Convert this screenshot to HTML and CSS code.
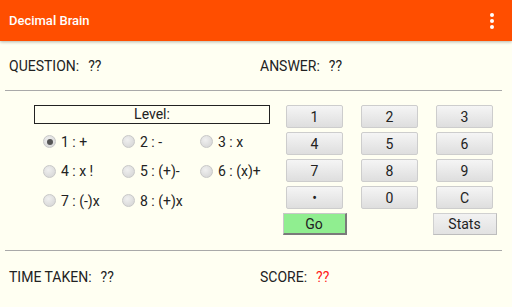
FILE: index.html
```html
<!DOCTYPE html>
<html lang="en">
<head>
    <meta charset="UTF-8">
    <meta name="viewport" content="width=device-width, initial-scale=1.0">
    <title>Decimal Brain</title>
    <link rel="stylesheet" href="styles.css">
</head>
<body>
    <div class="appbar">
        <span class="app-title">Decimal Brain</span>
        <span class="menu-dots"><i></i><i></i><i></i></span>
    </div>

    <div class="info-row">
        <div>QUESTION:<span class="value">??</span></div>
        <div>ANSWER:<span class="value">??</span></div>
    </div>

    <div class="divider"></div>

    <div class="middle">
        <div class="level-panel">
            <div class="level-box">Level:</div>
            <div class="levels">
                <label class="level"><span class="radio checked"></span>1 : +</label>
                <label class="level"><span class="radio"></span>2 : -</label>
                <label class="level"><span class="radio"></span>3 : x</label>
                <label class="level"><span class="radio"></span>4 : x !</label>
                <label class="level"><span class="radio"></span>5 : (+)-</label>
                <label class="level"><span class="radio"></span>6 : (x)+</label>
                <label class="level"><span class="radio"></span>7 : (-)x</label>
                <label class="level"><span class="radio"></span>8 : (+)x</label>
            </div>
        </div>

        <div class="keypad">
            <button class="key">1</button>
            <button class="key">2</button>
            <button class="key">3</button>
            <button class="key">4</button>
            <button class="key">5</button>
            <button class="key">6</button>
            <button class="key">7</button>
            <button class="key">8</button>
            <button class="key">9</button>
            <button class="key">&bull;</button>
            <button class="key">0</button>
            <button class="key">C</button>
            <button class="key go">Go</button>
            <span></span>
            <button class="key stats">Stats</button>
        </div>
    </div>

    <div class="divider"></div>

    <div class="info-row bottom">
        <div>TIME TAKEN:<span class="value">??</span></div>
        <div>SCORE:<span class="value score">??</span></div>
    </div>
</body>
</html>
```

FILE: styles.css
```css
body {
    margin: 0;
    font-family: Roboto, "Liberation Sans", sans-serif;
    font-size: 14px;
    color: #222;
    background: #fffff2;
    height: 307px;
    overflow: hidden;
}
.appbar {
    height: 41px;
    background: #ff4e00;
    display: flex;
    align-items: center;
    justify-content: space-between;
    padding: 0 18px 0 9px;
    box-shadow: 0 1px 3px rgba(0,0,0,0.3);
    position: relative;
}
.app-title {
    color: white;
    font-weight: 500;
    font-size: 13px;
}
.menu-dots {
    display: flex;
    flex-direction: column;
    gap: 2px;
}
.menu-dots i {
    width: 4px;
    height: 4px;
    border-radius: 50%;
    background: white;
}
.info-row {
    height: 49px;
    display: grid;
    grid-template-columns: 251px 1fr;
    align-items: center;
    padding-left: 9px;
}
.info-row.bottom {
    height: 52px;
}
.value {
    margin-left: 9px;
}
.score {
    color: #ff1a1a;
}
.divider {
    margin: 0 10px 0 5px;
    border-top: 1px solid #a9a9a9;
}
.middle {
    display: flex;
    padding: 14px 0 15px;
}
.level-panel {
    margin-left: 34px;
    width: 236px;
}
.level-box {
    height: 17px;
    line-height: 17px;
    border: 1px solid #222;
    text-align: center;
    font-size: 14px;
}
.levels {
    display: grid;
    grid-template-columns: 79px 78px 70px;
    grid-auto-rows: 29.5px;
    margin: 3px 0 0 9px;
}
.level {
    display: flex;
    align-items: center;
    gap: 5px;
}
.radio {
    width: 11px;
    height: 11px;
    border-radius: 50%;
    border: 1px solid #c8c8c8;
    background: radial-gradient(circle at 40% 35%, #f0f0f0, #d2d2d2);
    display: flex;
    align-items: center;
    justify-content: center;
}
.radio.checked::after {
    content: "";
    width: 6px;
    height: 6px;
    border-radius: 50%;
    background: #555;
}
.keypad {
    margin-left: 16px;
    display: grid;
    grid-template-columns: 57px 57px 57px;
    grid-template-rows: 23px 23px 23px 23px 22px;
    column-gap: 18px;
    row-gap: 4px;
}
.key {
    font-family: inherit;
    font-size: 14px;
    color: #222;
    padding: 0;
    border: 1px solid #cdcdcd;
    border-radius: 2px;
    background: linear-gradient(#f5f5f5, #dedede);
}
.key.go,
.key.stats {
    width: 64px;
    justify-self: center;
    border-radius: 0;
}
.key.go {
    background: #90ee90;
    border-top: 1px solid #c8c8c8;
    border-left: 1px solid #c8c8c8;
    border-right: 2px solid #7a7a7a;
    border-bottom: 2px solid #7a7a7a;
}
.key.stats {
    background: linear-gradient(#f2f2f2, #e2e2e2);
    border: 1px solid #d0d0d0;
    border-right-color: #bdbdbd;
    border-bottom-color: #bdbdbd;
}
```
